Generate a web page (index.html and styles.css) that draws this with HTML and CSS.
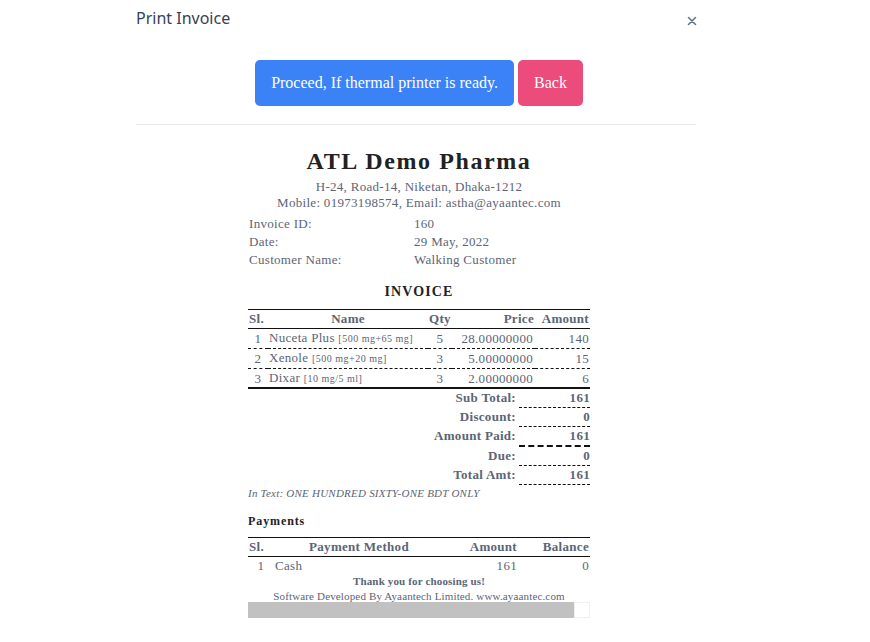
FILE: index.html
```html
<!DOCTYPE html>
<html lang="en">
<head>
    <meta charset="UTF-8">
    <title>Print Invoice</title>
    <link rel="stylesheet" href="styles.css">
</head>
<body>
<div class="modal">
    <div class="modal-header">
        <span class="modal-title">Print Invoice</span>
        <button class="close" aria-label="Close">
            <svg width="10" height="10" viewBox="0 0 10 10"><path d="M1.5 1.5L8.5 8.5M8.5 1.5L1.5 8.5" stroke="#64748b" stroke-width="1.6" stroke-linecap="round"/></svg>
        </button>
    </div>
    <div class="actions">
        <button class="btn btn-blue">Proceed, If thermal printer is ready.</button>
        <button class="btn btn-pink">Back</button>
    </div>
    <div class="divider"></div>

    <div class="invoice">
        <h1 class="shop">ATL Demo Pharma</h1>
        <p class="address">H-24, Road-14, Niketan, Dhaka-1212<br>Mobile: 01973198574, Email: astha@ayaantec.com</p>

        <table class="info">
            <tr><td class="info-label">Invoice ID:</td><td>160</td></tr>
            <tr><td class="info-label">Date:</td><td>29 May, 2022</td></tr>
            <tr><td class="info-label">Customer Name:</td><td>Walking Customer</td></tr>
        </table>

        <h2 class="invoice-title">INVOICE</h2>

        <table class="items">
            <colgroup>
                <col style="width:20px"><col style="width:160px"><col style="width:24px"><col style="width:83px"><col style="width:55px">
            </colgroup>
            <thead>
                <tr><th class="left">Sl.</th><th>Name</th><th>Qty</th><th class="right">Price</th><th class="right">Amount</th></tr>
            </thead>
            <tbody>
                <tr><td class="center">1</td><td>Nuceta Plus <small>[500 mg+65 mg]</small></td><td class="center">5</td><td class="right">28.00000000</td><td class="right">140</td></tr>
                <tr><td class="center">2</td><td>Xenole <small>[500 mg+20 mg]</small></td><td class="center">3</td><td class="right">5.00000000</td><td class="right">15</td></tr>
                <tr class="last"><td class="center">3</td><td>Dixar <small>[10 mg/5 ml]</small></td><td class="center">3</td><td class="right">2.00000000</td><td class="right">6</td></tr>
            </tbody>
        </table>

        <table class="totals">
            <tr><td class="t-label">Sub Total:</td><td class="t-value">161</td></tr>
            <tr><td class="t-label">Discount:</td><td class="t-value">0</td></tr>
            <tr><td class="t-label">Amount Paid:</td><td class="t-value thick">161</td></tr>
            <tr><td class="t-label">Due:</td><td class="t-value">0</td></tr>
            <tr><td class="t-label">Total Amt:</td><td class="t-value">161</td></tr>
        </table>

        <p class="in-text">In Text: ONE HUNDRED SIXTY-ONE BDT ONLY</p>

        <h3 class="payments-title">Payments</h3>
        <table class="payments">
            <colgroup>
                <col style="width:26px"><col style="width:174px"><col style="width:72px"><col style="width:70px">
            </colgroup>
            <thead>
                <tr><th class="left">Sl.</th><th class="method">Payment Method</th><th class="right">Amount</th><th class="right">Balance</th></tr>
            </thead>
            <tbody>
                <tr><td class="center">1</td><td>Cash</td><td class="right">161</td><td class="right">0</td></tr>
            </tbody>
        </table>

        <p class="thanks">Thank you for choosing us!</p>
        <p class="credit">Software Developed By Ayaantech Limited. www.ayaantec.com</p>

        <div class="scrollbar">
            <div class="scroll-thumb"></div>
            <div class="scroll-corner"></div>
        </div>
    </div>
</div>
</body>
</html>
```
FILE: styles.css
```css
body {
    margin: 0;
    background-color: white;
    font-family: "Liberation Serif", "Times New Roman", serif;
}

.modal {
    width: 566px;
    margin-left: 136px;
}

.modal-header {
    display: flex;
    justify-content: space-between;
    align-items: center;
    height: 36px;
    padding-right: 6px;
}

.modal-title {
    font-family: "Noto Sans", "Open Sans", sans-serif;
    font-size: 16px;
    color: #374151;
}

.close {
    background: none;
    border: none;
    padding: 0;
    margin-top: 6px;
    margin-right: -1px;
    width: 10px;
    height: 10px;
    display: flex;
    cursor: pointer;
}

.actions {
    display: flex;
    justify-content: center;
    gap: 4px;
    margin-top: 24px;
}

.btn {
    height: 46px;
    border: none;
    border-radius: 5px;
    color: white;
    font-family: "Liberation Serif", "Times New Roman", serif;
    font-size: 16px;
    cursor: pointer;
}

.btn-blue {
    background-color: #3b82f6;
    padding: 0 16px;
}

.btn-pink {
    background-color: #ec4c7b;
    padding: 0 16px;
}

.divider {
    width: 560px;
    height: 1px;
    background-color: #e5e7eb;
    margin-top: 18px;
}

.invoice {
    width: 342px;
    margin: 0 auto;
    color: #5b6577;
    font-size: 13px;
    letter-spacing: 0.3px;
}

.shop {
    margin: 21px 0 0;
    text-align: center;
    font-size: 24px;
    line-height: 30px;
    letter-spacing: 1.6px;
    color: #222;
}

.address {
    margin: 3px 0 0;
    text-align: center;
    line-height: 16px;
}

.info {
    margin-top: 4px;
    border-collapse: collapse;
    width: 100%;
}

.info td {
    padding: 0 0 0 1px;
    line-height: 18px;
}

.info-label {
    width: 164px;
}

.invoice-title {
    margin: 14px 0 0;
    text-align: center;
    font-size: 14px;
    line-height: 18px;
    letter-spacing: 1.1px;
    color: #222;
}

.items, .payments {
    width: 100%;
    border-collapse: collapse;
    table-layout: fixed;
    margin-top: 8px;
}

.items th, .payments th {
    font-weight: bold;
    line-height: 18px;
    padding: 0 1px;
    border-top: 1px solid #111;
    border-bottom: 1px solid #111;
}

.items td, .payments td {
    line-height: 18px;
    padding: 0 1px;
    white-space: nowrap;
}

.items td {
    border-bottom: 1px dashed #111;
}

.items tr.last td {
    line-height: 17px;
    border-bottom: 2px solid #111;
}

.items small {
    font-size: 10px;
    letter-spacing: 0.5px;
}

.left { text-align: left; }
.center { text-align: center; }
.right { text-align: right; }

.items td:nth-child(4) {
    padding-right: 2px;
}

.totals {
    width: 100%;
    border-collapse: collapse;
}

.totals td {
    line-height: 18px;
    padding: 0;
    font-weight: bold;
}

.t-label {
    text-align: right;
    padding-right: 3px !important;
}

.t-value {
    width: 71px;
    text-align: right;
    border-bottom: 1px dashed #111;
}

.t-value.thick {
    border-bottom: 2px dashed #111;
}

.in-text {
    margin: 1px 0 0;
    font-size: 11px;
    font-style: italic;
    line-height: 14px;
    letter-spacing: 0.23px;
}

.payments-title {
    margin: 13px 0 0;
    font-size: 12px;
    line-height: 16px;
    letter-spacing: 0.9px;
    color: #222;
}

.payments {
    margin-top: 8px;
}

.payments th.method {
    padding-right: 5px;
}

.payments td:nth-child(3),
.payments th:nth-child(3) {
    padding-right: 3px;
}

.thanks {
    margin: 0;
    text-align: center;
    font-size: 11px;
    font-weight: bold;
    line-height: 12px;
    letter-spacing: 0.15px;
}

.credit {
    margin: 3px 0 0;
    text-align: center;
    font-size: 11px;
    line-height: 12px;
    letter-spacing: 0.15px;
}

.scrollbar {
    display: flex;
    height: 16px;
}

.scroll-thumb {
    flex: 1;
    background-color: #c1c1c1;
}

.scroll-corner {
    width: 16px;
    border: 1px solid #f0f0f0;
    box-sizing: border-box;
    background-color: white;
}
```
